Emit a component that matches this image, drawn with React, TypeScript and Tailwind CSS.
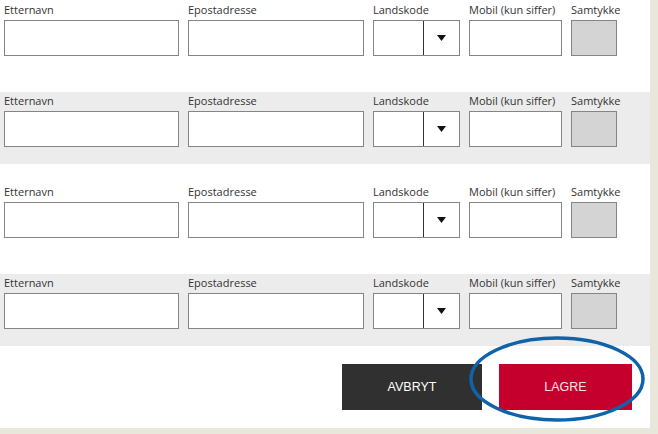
import { Fragment } from 'react';

const rows = [false, true, false, true];

function Field({ label, width, children }: { label: string; width: string; children: React.ReactNode }) {
  return (
    <div className={`flex flex-col ${width}`}>
      <span className="h-[14px] text-[11px] leading-[14px] text-[#333] whitespace-nowrap">{label}</span>
      <div className="mt-[3px] h-[36px]">{children}</div>
    </div>
  );
}

function Row({ shaded }: { shaded: boolean }) {
  return (
    <div className={`flex h-[72px] gap-[9px] px-[4px] pt-[2px] ${shaded ? 'bg-[#ececec]' : 'bg-white'}`}>
      <Field label="Etternavn" width="w-[175px]">
        <div className="h-full border border-[#858585] bg-white" />
      </Field>
      <Field label="Epostadresse" width="w-[176px]">
        <div className="h-full border border-[#858585] bg-white" />
      </Field>
      <Field label="Landskode" width="w-[87px]">
        <div className="flex h-full border border-[#858585] bg-white">
          <div className="flex-1 border-r border-[#333]" />
          <div className="flex w-[35px] items-center justify-center">
            <svg width="9" height="6" viewBox="0 0 9 6">
              <path d="M0 0 L9 0 L4.5 6 Z" fill="#111" />
            </svg>
          </div>
        </div>
      </Field>
      <Field label="Mobil (kun siffer)" width="w-[93px]">
        <div className="h-full border border-[#858585] bg-white" />
      </Field>
      <Field label="Samtykke" width="w-[46px]">
        <div className="h-full border border-[#858585] bg-[#d4d4d4]" />
      </Field>
    </div>
  );
}

export default function App() {
  return (
    <div className="h-[434px] w-[658px] overflow-hidden bg-[#e9e6dc]" style={{ fontFamily: '"Open Sans", sans-serif' }}>
      <div className="relative flex h-[428px] w-[650px] flex-col bg-white pt-[1px]">
        {rows.map((shaded, i) => (
          <Fragment key={i}>
            {i > 0 && <div className="h-[19px] shrink-0" />}
            <Row shaded={shaded} />
          </Fragment>
        ))}
        <div className="flex justify-end gap-[17px] pr-[18px] pt-[18px]" style={{ fontFamily: '"Liberation Sans", Arial, sans-serif' }}>
          <button className="h-[46px] w-[140px] bg-[#303030] text-[12.5px] text-white">AVBRYT</button>
          <button className="h-[46px] w-[133px] bg-[#c6002c] text-[12.5px] text-[#fbe3e8]">LAGRE</button>
        </div>
        <svg className="pointer-events-none absolute left-0 top-0" width="650" height="428">
          <ellipse cx="557" cy="379" rx="86" ry="41" fill="none" stroke="#0f63aa" strokeWidth="3.5" />
        </svg>
      </div>
    </div>
  );
}
